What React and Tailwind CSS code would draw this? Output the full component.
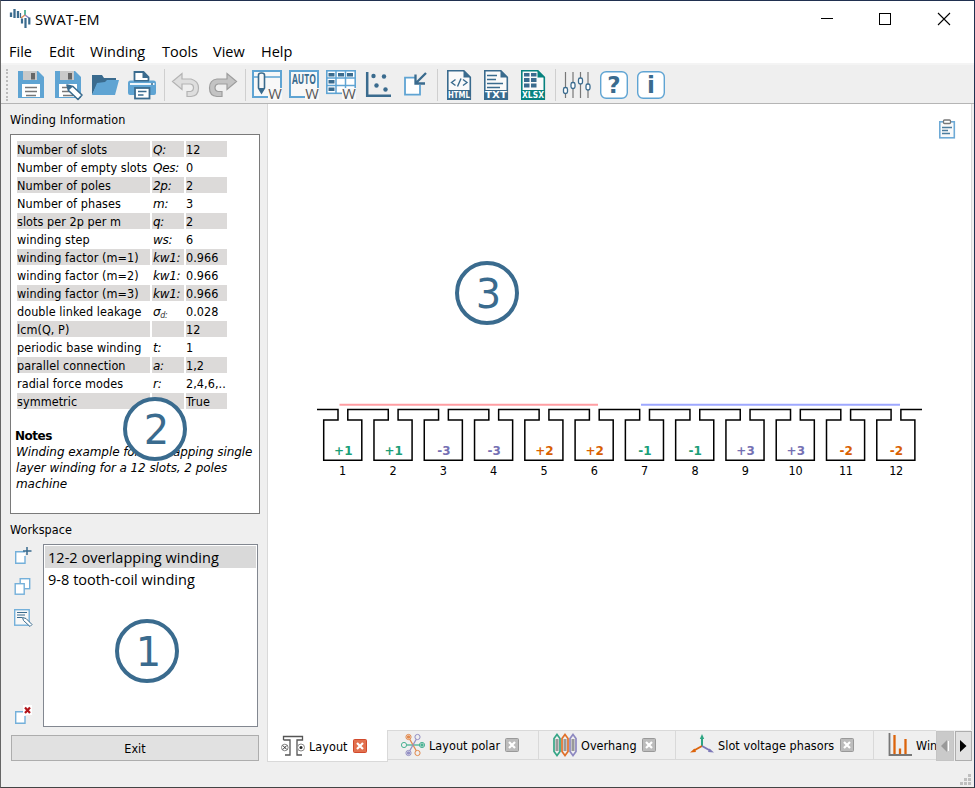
import React from "react";

const B = "#5fa4d3";
const D = "#3a6b8e";

function Ico({ children, size = 30, className = "" }) {
  return (
    <svg width={size} height={size} viewBox={`0 0 ${size} ${size}`} className={`block shrink-0 overflow-visible ${className}`}>
      {children}
    </svg>
  );
}

const W = () => (
  <>
    <rect x="16" y="18" width="14" height="12" fill="#f8f8f8" />
    <text x="16.2" y="28.500" fontSize="14.5" textLength="13.6" lengthAdjust="spacingAndGlyphs" fill="#555" fontFamily="Open Sans, sans-serif">W</text>
  </>
);

function Floppy() {
  return (
    <>
      <path d="M2 1h20l6 6v21H2z" fill={B} />
      <rect x="7" y="1" width="14" height="9" fill="#c9c9c9" />
      <rect x="15" y="3" width="4" height="6.500" fill="#666" />
      <rect x="6" y="14" width="18" height="13" fill="#fff" />
      <path d="M9 17.500h12M9 21.500h12M10 25.500h10" stroke="#777" strokeWidth="1.300" />
    </>
  );
}

const Save = () => <Ico><Floppy /></Ico>;
const SaveAs = () => (
  <Ico>
    <Floppy />
    <path d="M14 15l6 1.500 9 8.500-4 4.500-9.500-9z" fill="#fff" stroke={D} strokeWidth="1.600" strokeLinejoin="round" />
    <path d="M14 15l6 1.500-4.500 4z" fill={D} />
  </Ico>
);
const Folder = () => (
  <Ico>
    <path d="M2 25V5h10l2 3h12v7H7z" fill={D} />
    <path d="M7 13l8-1 2-2h12l-4 15H2z" fill={B} />
  </Ico>
);
const Printer = () => (
  <Ico>
    <path d="M7.500 11V2h9l5 5v4z" fill="#fff" stroke={D} strokeWidth="1.800" />
    <path d="M15.500 1.500v6.500h6.500z" fill={D} />
    <path d="M1 13q0-2.500 2.500-2.500H7v1h15v-1h4.500q2.500 0 2.500 2.500v10q0 2-2 2H3q-2 0-2-2z" fill={B} />
    <path d="M3 14h24.500" stroke="#fff" strokeWidth="1.800" />
    <path d="M24 14h2" stroke={D} strokeWidth="1.500" />
    <rect x="8" y="18" width="14.500" height="10.500" fill="#fff" stroke={D} strokeWidth="1.800" />
    <path d="M11 21.500h8.500M11 25h5.500" stroke={D} strokeWidth="1.500" />
  </Ico>
);
const Undo = () => (
  <Ico>
    <path d="M1.500 11.500L11 3.500V9h9q7.500 2 7.500 9 0 8-7.500 8.500h-4v-5h3.500q3-.5 3-4 0-3-3-3.500H11v5.500z" fill="#dedede" stroke="#b3b3b3" strokeWidth="1.200" />
  </Ico>
);
const Redo = () => (
  <Ico>
    <path d="M28.500 11.500L19 3.500V9H9q-7.500 1-7.500 9 0 8 7.500 8.500h5v-5h-4q-3-.5-3-4 0-3 3-3.500h9v5.500z" fill="#c3c3c3" stroke="#9d9d9d" strokeWidth="1.200" />
  </Ico>
);
const PencilW = () => (
  <Ico>
    <rect x="1" y="1" width="28" height="26" fill="#f8f8f8" stroke={B} strokeWidth="2" />
    <path d="M2 7h26" stroke={B} strokeWidth="1.500" />
    <path d="M6.500 5q0-2 3-2t3 2v13l-3 5-3-5z" fill="#f8f8f8" stroke={D} strokeWidth="1.600" />
    <path d="M6.500 18h6l-3 5z" fill={D} />
    <W />
  </Ico>
);
const AutoW = () => (
  <Ico>
    <rect x="1" y="1" width="28" height="26" fill="#f8f8f8" stroke={B} strokeWidth="2" />
    <text x="3" y="13.500" fontSize="14" fontWeight="700" textLength="24" lengthAdjust="spacingAndGlyphs" fill={D} fontFamily="Open Sans, sans-serif">AUTO</text>
    <W />
  </Ico>
);
const TableW = () => (
  <Ico>
    <rect x=".8" y=".8" width="28.400" height="22.500" fill="#fff" stroke={B} strokeWidth="1.600" />
    <path d="M1 8h28M1 15.500h28M10 1v22.500M19.500 1v22.500" stroke={B} strokeWidth="1.500" />
    <path d="M2.500 3h6v3.500h-6zM12 3h6v3.500h-6zM21 3h6v3.500h-6zM2.500 10h6v3.500h-6zM2.500 17.500h6v3.500h-6z" fill={D} />
    <W />
  </Ico>
);
const Scatter = () => (
  <Ico>
    <path d="M4.200 2v23.800H28" fill="none" stroke={D} strokeWidth="2.500" />
    <circle cx="10.500" cy="6" r="2.200" fill={D} />
    <circle cx="21" cy="6.500" r="2.200" fill={D} />
    <circle cx="13.500" cy="15.500" r="2.200" fill={D} />
    <circle cx="22.500" cy="19.500" r="2.200" fill={D} />
  </Ico>
);
const Import = () => (
  <Ico>
    <path d="M15 7.700H5v17h15V15" fill="#fff" stroke={B} strokeWidth="1.800" />
    <path d="M26 3L16.500 12.500M15.500 4.500v9H25" fill="none" stroke={D} strokeWidth="2.300" />
  </Ico>
);
function Doc({ color, label, children }) {
  return (
    <Ico>
      <path d="M3.800.800h16l6.500 6.500V29H3.800z" fill="#fafafa" stroke={color} strokeWidth="1.600" />
      <path d="M19.500 0v7.500H27z" fill={color} />
      <rect x="3" y="20" width="24" height="10" fill={color} />
      <text x="4" y="28.200" fontSize="8.500" fontWeight="700" textLength="22" lengthAdjust="spacingAndGlyphs" fill="#fff" fontFamily="DejaVu Sans, sans-serif">{label}</text>
      {children}
    </Ico>
  );
}
const Html = () => (
  <Doc color={D} label="HTML">
    <path d="M11.500 9.500l-4 3 4 3M19 9.500l4 3-4 3M17 8.500l-3.500 8" fill="none" stroke={D} strokeWidth="1.400" />
  </Doc>
);
const Txt = () => (
  <Doc color={D} label="TXT">
    <path d="M6 5.500h10M6 9.500h9M6 13.500h16M6 17.500h13" stroke={D} strokeWidth="1.600" />
  </Doc>
);
const Xlsx = () => (
  <Doc color="#07827f" label="XLSX">
    <path d="M6 3h5.500v3.500H6zM13 3h5.500v3.500H13zM6 8h5.500v4H6zM13 8h5.500v4H13zM6 13.500h5.500v4H6zM13 13.500h5.500v4H13z" fill={D} />
  </Doc>
);
const Sliders = () => (
  <Ico>
    <path d="M3.500 2v26M11 2v26M18.500 2v26M26 2v26" stroke="#777" strokeWidth="1.200" />
    {[[3.5, 20.5], [11, 15.5], [18.5, 11], [26, 17]].map(([x, y]) => (
      <rect key={x} x={x - 2} y={y - 3} width="4" height="6" rx="1.800" fill="#fff" stroke={D} strokeWidth="1.300" />
    ))}
  </Ico>
);
const Round = ({ ch }) => (
  <Ico>
    <rect x="1.700" y="1.700" width="26.600" height="26.600" rx="5.500" fill="#fff" stroke={B} strokeWidth="1.400" />
    <text x="15" y="22.800" textAnchor="middle" fontSize="23" fontWeight="700" fill={D} fontFamily="DejaVu Sans, sans-serif">{ch}</text>
  </Ico>
);
const Sep = () => <div className="ml-1 mr-0.5 h-8 w-px shrink-0 bg-[#cfcfcf]" />;

const groups = [
  [Save, SaveAs, Folder, Printer],
  [Undo, Redo],
  [PencilW, AutoW, TableW, Scatter, Import],
  [Html, Txt, Xlsx],
  [Sliders, () => <Round ch="?" />, () => <Round ch="i" />],
];

function Logo() {
  return (
    <Ico size={22}>
      <path d="M2 4.500v4.500M5.500 1v9M9 3v7" stroke={D} strokeWidth="2.300" />
      <path d="M11.500 5v5" stroke={D} strokeWidth="1.200" />
      <path d="M16 7.500V2" stroke="#35a586" strokeWidth="1.600" />
      <path d="M16 7l-4 3" stroke="#e08a55" strokeWidth="1.500" />
      <path d="M16 7l4 3" stroke="#8a83c0" strokeWidth="1.500" />
      <path d="M13 10.500v5M16.500 10v10M20.300 9.500v7" stroke={D} strokeWidth="2.200" />
    </Ico>
  );
}

const rows = [
  ["Number of slots", "Q:", "12"],
  ["Number of empty slots", "Qes:", "0"],
  ["Number of poles", "2p:", "2"],
  ["Number of phases", "m:", "3"],
  ["slots per 2p per m", "q:", "2"],
  ["winding step", "ws:", "6"],
  ["winding factor (m=1)", "kw1:", "0.966"],
  ["winding factor (m=2)", "kw1:", "0.966"],
  ["winding factor (m=3)", "kw1:", "0.966"],
  ["double linked leakage", "sigma", "0.028"],
  ["lcm(Q, P)", "", "12"],
  ["periodic base winding", "t:", "1"],
  ["parallel connection", "a:", "1,2"],
  ["radial force modes", "r:", "2,4,6,.."],
  ["symmetric", "", "True"],
];

function Badge({ n, className }) {
  return (
    <div className={`absolute flex size-16 items-center justify-center rounded-full border-4 border-[#3a6b8e] bg-white pl-[3px] pt-0.5 font-['DejaVu_Sans',sans-serif] text-[40px] leading-none tracking-normal text-[#3a6b8e] ${className}`}>
      {n}
    </div>
  );
}

const G = "#1b9e77", P = "#7570b3", O = "#d95f02";
const slots = [
  ["+1", G], ["+1", G], ["-3", P], ["-3", P], ["+2", O], ["+2", O],
  ["-1", G], ["-1", G], ["+3", P], ["+3", P], ["-2", O], ["-2", O],
];

function Winding() {
  let d = "M1 10.500";
  slots.forEach((_, i) => {
    const x = 50.28 * i;
    d += `H${22 + x}V21H${7.7 + x}V61.300H${45.8 + x}V21H${31.8 + x}V10.500`;
  });
  d += "H606";
  return (
    <svg width="608" height="84" viewBox="0 0 608 84" className="block">
      <path d="M23.500 5.800H282" stroke="#ff9ea3" strokeWidth="2" />
      <path d="M325 5.800H584" stroke="#9ea8ff" strokeWidth="2" />
      <path d={d} fill="none" stroke="#000" strokeWidth="1.500" />
      {slots.map(([t, c], i) => (
        <g key={i} textAnchor="middle">
          <text x={27.3 + 50.28 * i} y="55.700" fontSize="12" fontWeight="700" letterSpacing="0" fill={c} fontFamily="DejaVu Sans, sans-serif">{t}</text>
          <text x={26.5 + 50.33 * i} y="76" fontSize="12.5" letterSpacing="-.3" fontFamily="DejaVu Sans Condensed, DejaVu Sans, sans-serif">{i + 1}</text>
        </g>
      ))}
    </svg>
  );
}

function Close({ active }) {
  return (
    <svg width="14" height="14" viewBox="0 0 14 14" className="block shrink-0">
      <rect x=".5" y=".5" width="13" height="13" rx="1" fill={active ? "#e2714f" : "#bcbcbc"} stroke={active ? "#d14a2c" : "#999"} />
      <path d="M4 4l6 6M10 4l-6 6" stroke="#fff" strokeWidth="2.200" />
    </svg>
  );
}

const TabLayout = () => (
  <Ico size={24}>
    <path d="M2.500 6V2.500h19V6h-5.500v15h5M2.500 6H9v15H4" fill="none" stroke="#555" strokeWidth="1.300" />
    <circle cx="3.800" cy="13.500" r="3.300" fill="#fff" stroke="#888" />
    <path d="M1.800 11.500l4 4M5.800 11.500l-4 4" stroke="#333" />
    <circle cx="20" cy="13.500" r="3.500" fill="#fff" stroke="#888" />
    <circle cx="20" cy="13.500" r="1.500" fill="#222" />
  </Ico>
);
const TabPolar = () => (
  <Ico size={24}>
    <path d="M4 12h16" stroke="#4bb394" strokeWidth="1.300" />
    <path d="M8 5l8 14" stroke="#e2894c" strokeWidth="1.300" />
    <path d="M16 5L8 19" stroke="#938fc4" strokeWidth="1.300" />
    {[[3, 12, "#4bb394", 0], [21, 12, "#4bb394", 1], [7.5, 4, "#e2894c", 1], [16.5, 20, "#e2894c", 0], [16.5, 4, "#938fc4", 0], [7.5, 20, "#938fc4", 1]].map(([x, y, c, f], i) => (
      <g key={i}>
        <circle cx={x} cy={y} r="2.600" fill="#efefef" stroke={c} strokeWidth="1" />
        {f ? <circle cx={x} cy={y} r="1.700" fill={c} /> : null}
      </g>
    ))}
  </Ico>
);
const TabOverhang = () => (
  <Ico size={24}>
    {[[4, "#35a586"], [12, "#e0702a"], [20, "#8d88c0"]].map(([x, c]) => (
      <g key={x}>
        <rect x={x - 1.5} y="6" width="3" height="12" fill="#999" />
        <path d={`M${x} 1.500l3 4v13l-3 4-3-4v-13z`} fill="none" stroke={c} strokeWidth="1.700" />
      </g>
    ))}
  </Ico>
);
const TabPhasor = () => (
  <Ico size={24}>
    <path d="M12 13V5" stroke="#2ea583" strokeWidth="2" />
    <path d="M12 1l2.200 5H9.800z" fill="#2ea583" />
    <path d="M12 13l-8 4.500" stroke="#dc640c" strokeWidth="2" />
    <path d="M0 19.500l4.500-4 1.500 3.500z" fill="#dc640c" />
    <path d="M12 13l8 4.500" stroke="#7d78b8" strokeWidth="2" />
    <path d="M24 19.500l-4.500-4-1.500 3.500z" fill="#7d78b8" />
  </Ico>
);
const TabBars = () => (
  <Ico size={24}>
    <path d="M1.500 0v22H24" fill="none" stroke="#777" strokeWidth="1.800" />
    <path d="M6.500 2v19M12 15.500v5.500M17.500 6v15" stroke="#dc640c" strokeWidth="2.300" />
  </Ico>
);

const New = () => (
  <Ico size={20}>
    <path d="M11 5.700H1.700v11.600H11V10" fill="#fff" stroke="#74b0da" strokeWidth="1.400" />
    <path d="M13 1v8M9 5h8.500" stroke={D} strokeWidth="1.500" />
  </Ico>
);
const Copy = () => (
  <Ico size={20}>
    <rect x="6.200" y="1.700" width="9.500" height="10" fill="#fff" stroke="#74b0da" strokeWidth="1.400" />
    <rect x="1.200" y="6.700" width="9" height="10.500" fill="#fff" stroke="#74b0da" strokeWidth="1.400" />
  </Ico>
);
const Edit = () => (
  <Ico size={20}>
    <rect x=".7" y="1.700" width="14.500" height="15.500" fill="#f8f8f8" stroke="#74b0da" strokeWidth="1.400" />
    <path d="M3 4.500h10M3 7h8M3 9.500h5" stroke={D} strokeWidth="1.200" />
    <path d="M8.500 9.500l3.500 1 6 6-2 2-6.500-6z" fill="#fff" stroke={D} />
  </Ico>
);
const Delete = () => (
  <Ico size={20}>
    <path d="M10 5.700H1.700v11.600H11V10" fill="#fff" stroke="#74b0da" strokeWidth="1.400" />
    <rect x="9" y="-1" width="9" height="10" fill="#fff" />
    <path d="M11 1.500l5 5.500M16 1.500l-5 5.500" stroke="#b3151a" strokeWidth="2.200" />
  </Ico>
);

const menus = [["File", "w-10"], ["Edit", "w-[41px]"], ["Winding", "w-[72px]"], ["Tools", "w-[51px]"], ["View", "w-12"], ["Help", "w-10"]];

export default function App() {
  return (
    <div className="flex h-[788px] w-[975px] flex-col overflow-hidden border border-b-[#444] border-l-[#666] border-r-[#203050] border-t-[#203050] bg-[#efefef] font-['DejaVu_Sans_Condensed','DejaVu_Sans',sans-serif] text-[12.5px] leading-4 tracking-[0.06px] text-black">
      <header className="flex h-9 shrink-0 items-center bg-white pl-2 font-['Open_Sans',sans-serif]">
        <Logo />
        <span className="ml-1 pt-0.5 text-[14.5px] tracking-[0.05px]">SWAT-EM</span>
        <svg width="132" height="14" viewBox="0 0 132 14" className="ml-auto mr-[22px] block">
          <path d="M1 6.500h12" stroke="#000" />
          <rect x="59.500" y="1.500" width="11" height="11" fill="none" stroke="#000" />
          <path d="M118 1l12 12M130 1l-12 12" stroke="#000" strokeWidth="1.100" />
        </svg>
      </header>
      <nav className="flex h-[26px] shrink-0 items-center bg-white pl-2 pt-1 font-['Open_Sans',sans-serif] text-[14.5px] tracking-[0px]">
        {menus.map(([m, w]) => <span key={m} className={w}>{m}</span>)}
      </nav>
      <div className="flex h-[41px] shrink-0 items-center border-b border-b-[#b5b5b5] border-t-2 border-t-[#f4f4f4] pl-[5px] pt-0.5">
        <div className="mr-1 h-8 w-0.5 border-l-2 border-dotted border-[#bbb]" />
        {groups.map((g, i) => (
          <React.Fragment key={i}>
            {i > 0 && <Sep />}
            {g.map((I, j) => <div key={j} className="w-[37px] shrink-0 pl-1"><I /></div>)}
          </React.Fragment>
        ))}
      </div>

      <div className="flex min-h-0 flex-1">
        <aside className="flex w-[266px] shrink-0 flex-col pl-[9px]">
          <div className="flex h-[30px] items-center pt-px">Winding Information</div>
          <section className="relative h-[380px] w-[250px] shrink-0 border border-[#7a7a7a] bg-white pl-1 pt-1.5">
            <div className="flex flex-col gap-0.5 pl-0.5">
              {rows.map(([a, b, c], i) => {
                const bg = i % 2 === 0 ? "bg-[#dcdad9]" : "";
                return (
                  <div key={i} className="flex h-4 gap-0.5 whitespace-nowrap leading-[17px]">
                    <div className={`w-[133px] ${bg}`}>{a}</div>
                    <div className={`w-8 pl-px font-['DejaVu_Sans',sans-serif] text-[12px] italic leading-[19px] tracking-[-0.3px] ${bg}`}>
                      {b === "sigma" ? <>σ<span className="relative top-0.5 text-[8px] text-[#333]">d:</span></> : b}
                    </div>
                    <div className={`w-[41px] ${bg}`}>{c}</div>
                  </div>
                );
              })}
            </div>
            <div className="mt-[19px] font-['DejaVu_Sans',sans-serif] text-[12px] font-bold tracking-[-0.5px]">Notes</div>
            <div className="whitespace-nowrap pl-px font-['DejaVu_Sans',sans-serif] text-[12px] italic tracking-[-0.08px]">
              Winding example for overlapping single<br />layer winding for a 12 slots, 2 poles<br />machine
            </div>
            <Badge n="2" className="left-[112px] top-[262px]" />
          </section>
          <div className="flex h-[30px] items-center pt-px">Workspace</div>
          <section className="flex h-[183px] shrink-0">
            <div className="flex w-[33px] shrink-0 flex-col items-start pb-px pl-1 pt-0.5">
              <New />
              <div className="mt-[11px]"><Copy /></div>
              <div className="mt-[11px]"><Edit /></div>
              <div className="mt-auto"><Delete /></div>
            </div>
            <div className="relative w-[215px] border border-[#828790] bg-white p-px font-['Open_Sans',sans-serif] text-[14.5px] leading-[24px] tracking-[0.03px]">
              <div className="h-[22px] bg-[#d9d9d9] pl-[3px]">12-2 overlapping winding</div>
              <div className="h-[22px] pl-[3px]">9-8 tooth-coil winding</div>
              <Badge n="1" className="left-[71px] top-[74px]" />
            </div>
          </section>
          <button className="ml-px mt-2 h-[26px] w-[248px] shrink-0 self-start border border-[#adadad] bg-[#e1e1e1] pt-px">Exit</button>
        </aside>

        <main className="flex w-[705px] shrink-0 flex-col">
          <div className="relative h-[626px] shrink-0 border-x border-[#d9d9d9] bg-white">
            <div className="flex justify-end pr-[15px] pt-[15px]">
              <svg width="18" height="20" viewBox="0 0 18 20" className="block">
                <rect x="1.800" y="2.800" width="14.500" height="16" fill="#fafafa" stroke="#6eaad6" strokeWidth="1.600" />
                <rect x="5.500" y="1" width="7" height="3.500" rx="1" fill="#fff" stroke="#777" strokeWidth="1.300" />
                <path d="M4 8.500h10M4 11.500h6M4 14.500h8" stroke="#4c7d9e" strokeWidth="1.500" />
              </svg>
            </div>
            <div className="pl-[48px] pt-[260px]"><Winding /></div>
            <Badge n="3" className="left-[187px] top-[157px]" />
          </div>
          <div className="flex h-8 overflow-hidden whitespace-nowrap">
            <div className="flex h-8 w-[121px] shrink-0 items-center border-x border-b border-[#d9d9d9] bg-white pl-[13px]">
              <TabLayout /><span className="ml-1 w-11 pt-0.5">Layout</span><Close active />
            </div>
            <div className="flex h-[30px] w-[151px] shrink-0 items-center border-b border-r border-t border-[#d9d9d9] pl-[13px]">
              <TabPolar /><span className="ml-1 w-[76px] pt-0.5">Layout polar</span><Close />
            </div>
            <div className="flex h-[30px] w-[137px] shrink-0 items-center border-b border-r border-t border-[#d9d9d9] pl-[14px]">
              <TabOverhang /><span className="ml-1 w-[61px] pt-0.5">Overhang</span><Close />
            </div>
            <div className="flex h-[30px] w-[198px] shrink-0 items-center border-b border-r border-t border-[#d9d9d9] pl-[14px]">
              <TabPhasor /><span className="ml-1 w-[122px] pt-0.5">Slot voltage phasors</span><Close />
            </div>
            <div className="flex h-[30px] w-[62px] shrink-0 items-center overflow-hidden border-b border-t border-[#d9d9d9] pl-[14px]">
              <TabBars /><span className="ml-1 pt-0.5">Winding factor</span>
            </div>
            <div className="mt-px flex h-[30px] w-[18px] shrink-0 items-center justify-center border border-[#c4c4c4] bg-[#cacaca]">
              <svg width="8" height="12" viewBox="0 0 8 12"><path d="M6 0v12L0 6z" fill="#999" /><path d="M7.500 1v10" stroke="#fff" /></svg>
            </div>
            <div className="ml-px mt-px flex h-[30px] w-[17px] shrink-0 items-center justify-center border border-[#adadad] bg-[#e1e1e1]">
              <svg width="7" height="12" viewBox="0 0 7 12"><path d="M0 0v12l6.500-6z" fill="#000" /></svg>
            </div>
          </div>
          <div className="flex flex-1 items-end justify-end pb-0.5 pr-px">
            <svg width="11" height="11" viewBox="0 0 11 11" className="block">
              <path d="M8 0h3v3H8zM4 4h3v3H4zM8 4h3v3H8zM0 8h3v3H0zM4 8h3v3H4zM8 8h3v3H8z" fill="#bfbfbf" />
            </svg>
          </div>
        </main>
      </div>
    </div>
  );
}
